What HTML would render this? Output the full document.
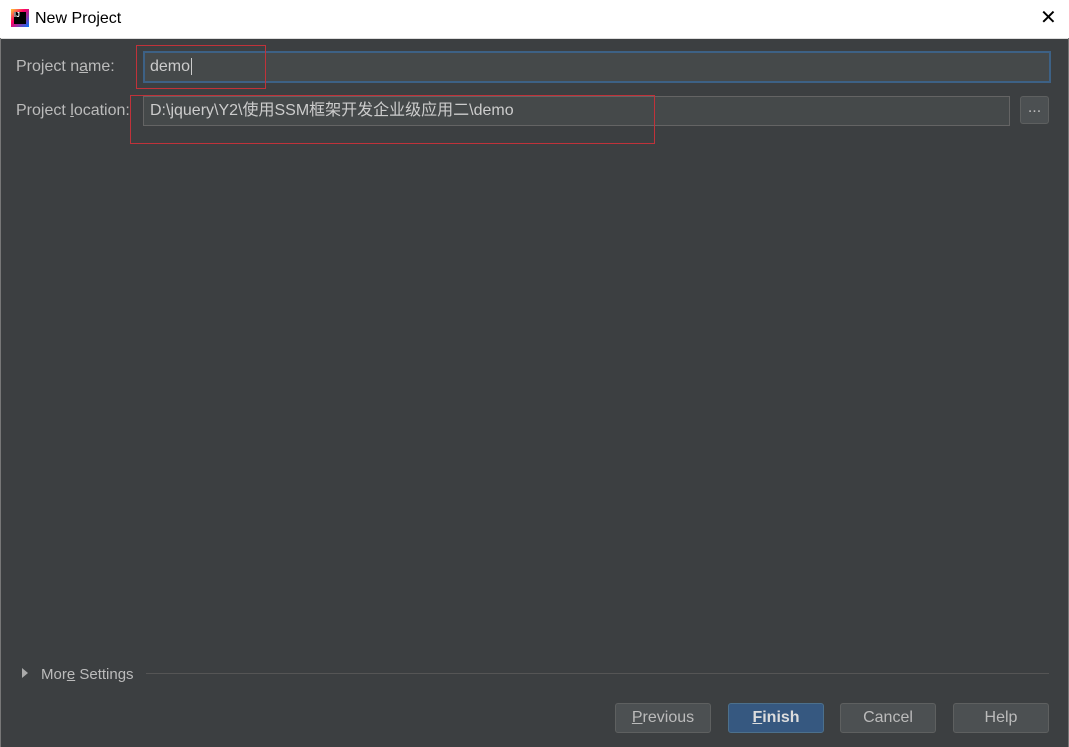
<!DOCTYPE html><html><head><style>
body{margin:0;width:1069px;height:747px;background:#3c3f41;font-family:"Liberation Sans","Noto Sans CJK SC",sans-serif;position:relative;overflow:hidden;color:#bbbbbb;font-size:16px;line-height:18px}
.a{position:absolute}
.btn{position:absolute;top:703px;width:96px;height:30px;border:1px solid #5e6060;background:#4c5052;border-radius:3px;box-sizing:border-box;text-align:center;line-height:28px;color:#bbb;font-size:16px}
</style></head><body>
<div class="a" style="left:0;top:0;width:1069px;height:38px;background:#fff;border-bottom:1px solid #ddd"></div>
<div class="a" style="left:11px;top:9px;width:18px;height:18px;background:linear-gradient(135deg,#fc3 0,#f06 40%,#07f 100%)"></div>
<div class="a" style="left:14px;top:12px;width:12px;height:12px;background:#000;color:#fff;font-size:7px;font-weight:bold;line-height:8px">IJ</div>
<div class="a" style="left:35px;top:10px;color:#000;font-size:16px">New Project</div>
<div class="a" style="left:1040px;top:6px;color:#000;font-size:20px;line-height:24px">✕</div>
<div class="a" style="left:0;top:38px;width:1px;height:709px;background:#777"></div>
<div class="a" style="left:1068px;top:38px;width:1px;height:709px;background:#777"></div>
<div class="a" style="left:16px;top:58px">Project n<u>a</u>me:</div>
<div class="a" style="left:143px;top:51px;width:904px;height:28px;background:#45494a;border:2px solid #3d6185;box-sizing:content-box"></div>
<div class="a" style="left:150px;top:58px;color:#ccc">demo<span style="border-left:1px solid #ccc;margin-left:1px"></span></div>
<div class="a" style="left:16px;top:102px">Project <u>l</u>ocation:</div>
<div class="a" style="left:143px;top:96px;width:865px;height:28px;background:#45494a;border:1px solid #646464"></div>
<div class="a" style="left:150px;top:102px;color:#ccc;line-height:18px;height:18px">D:\jquery\Y2\使用SSM框架开发企业级应用二\demo</div>
<div class="a" style="left:1020px;top:96px;width:29px;height:28px;background:#4c5052;border:1px solid #5e6060;border-radius:3px;box-sizing:border-box;text-align:center;line-height:22px">...</div>
<div class="a" style="left:136px;top:45px;width:130px;height:44px;border:1px solid #c0323a;box-sizing:border-box"></div>
<div class="a" style="left:130px;top:95px;width:525px;height:49px;border:1px solid #c0323a;box-sizing:border-box"></div>
<div class="a" style="left:22px;top:668px;width:0;height:0;border-left:6px solid #aaa;border-top:5px solid transparent;border-bottom:5px solid transparent"></div>
<div class="a" style="left:41px;top:666px;font-size:15px">Mor<u>e</u> Settings</div>
<div class="a" style="left:146px;top:673px;width:903px;height:1px;background:#555"></div>
<div class="btn" style="left:615px"><u>P</u>revious</div>
<div class="btn" style="left:728px;background:#365880;border-color:#4c708c;color:#ddd;font-weight:bold"><u>F</u>inish</div>
<div class="btn" style="left:840px">Cancel</div>
<div class="btn" style="left:953px">Help</div>
</body></html>
